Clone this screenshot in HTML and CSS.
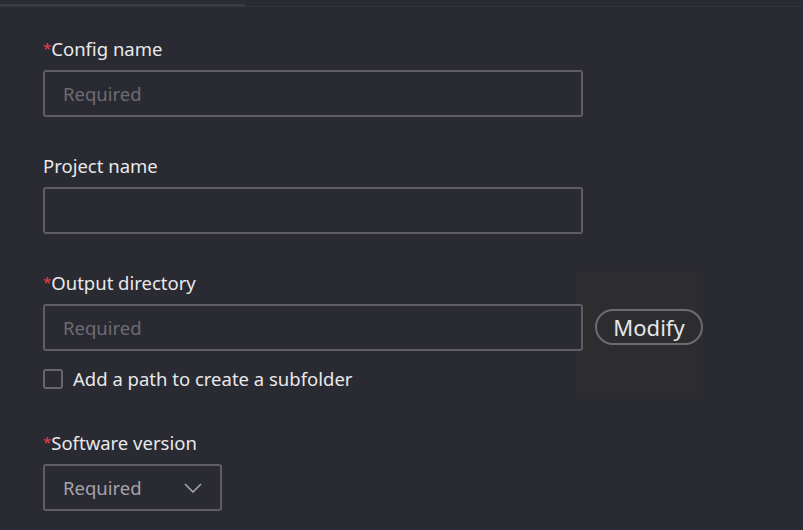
FILE: index.html
```html
<!DOCTYPE html>
<html lang="en">
<head>
  <meta charset="UTF-8" />
  <title>Config</title>
  <link rel="stylesheet" href="styles.css">
</head>
<body>
  <div class="topbar">
    <div class="tab-line"></div>
  </div>

  <form class="config-form">
    <div class="field">
      <label class="label"><span class="req">*</span>Config name</label>
      <input class="text-input" type="text" placeholder="Required" />
    </div>

    <div class="field">
      <label class="label">Project name</label>
      <input class="text-input" type="text" />
    </div>

    <div class="dir-row">
      <div class="dir-main">
        <label class="label"><span class="req">*</span>Output directory</label>
        <input class="text-input" type="text" placeholder="Required" />
        <label class="check">
          <span class="box"></span>
          Add a path to create a subfolder
        </label>
      </div>
      <div class="dir-side">
        <button type="button" class="pill">Modify</button>
      </div>
    </div>

    <div class="field">
      <label class="label"><span class="req">*</span>Software version</label>
      <div class="select">
        <span>Required</span>
        <svg width="18" height="10" viewBox="0 0 18 10"><path d="M1 1 L9 9 L17 1" fill="none" stroke="#a4a4aa" stroke-width="1.6"/></svg>
      </div>
    </div>
  </form>
</body>
</html>
```

FILE: styles.css
```css
* {
  box-sizing: border-box;
  margin: 0;
  padding: 0;
}

body {
  background: #2a2a32;
  font-family: 'Noto Sans', 'Open Sans', sans-serif;
  font-size: 18.5px;
  color: #e8e8ea;
  height: 530px;
  overflow: hidden;
}

.topbar {
  height: 7px;
  border-bottom: 1px solid #33333b;
  padding-top: 4px;
}

.tab-line {
  width: 245px;
  height: 2px;
  background: #3c3c45;
}

.config-form {
  padding: 30px 0 0 43px;
  display: flex;
  flex-direction: column;
}

.field {
  display: flex;
  flex-direction: column;
  margin-bottom: 37px;
}

.label {
  display: block;
  height: 24px;
  line-height: 24px;
  margin-bottom: 9px;
  color: #e8e8ea;
}

.req {
  color: #e5434d;
  font-size: 15px;
  line-height: 0;
  vertical-align: 2px;
}

.text-input {
  width: 540px;
  height: 47px;
  flex: none;
  border: 2px solid #5d5d63;
  border-radius: 3px;
  background: #2a2a32;
  color: #e8e8ea;
  font: inherit;
  padding: 0 18px;
  outline: none;
  position: relative;
  z-index: 1;
}

.text-input::placeholder {
  color: #6c6c72;
}

.dir-row {
  display: flex;
  align-items: flex-start;
  margin-bottom: 32px;
}

.dir-main {
  display: flex;
  flex-direction: column;
  width: 540px;
}

.dir-side {
  width: 128px;
  height: 128px;
  margin-left: -8px;
  background: #2d2d30;
  padding: 38px 0 0 20px;
}

.pill {
  width: 108px;
  height: 36px;
  border: 2px solid #6b6b70;
  border-radius: 18px;
  background: transparent;
  color: #e6e6e8;
  font-family: inherit;
  font-size: 22px;
  line-height: 30px;
}

.check {
  display: flex;
  align-items: center;
  gap: 10px;
  margin-top: 17px;
  line-height: 22px;
}

.box {
  width: 20px;
  height: 20px;
  border: 2px solid #66666c;
  border-radius: 3px;
}

.select {
  width: 179px;
  height: 47px;
  flex: none;
  border: 2px solid #5d5d63;
  border-radius: 3px;
  display: flex;
  align-items: center;
  justify-content: space-between;
  padding: 0 18px;
  color: #a4a4aa;
}
```
